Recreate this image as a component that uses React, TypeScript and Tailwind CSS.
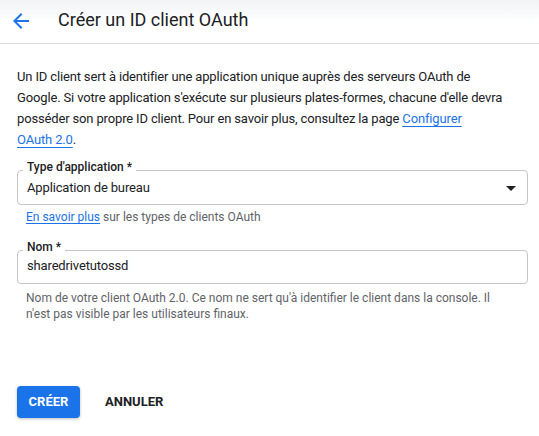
import React from "react";

export default function App() {
  return (
    <div className="w-[539px] h-[436px] bg-white text-[#202124] overflow-hidden" style={{ fontFamily: "Roboto, 'Liberation Sans', sans-serif" }}>
      <div className="h-[44px] border-b border-[#dadce0] flex items-center bg-gradient-to-b from-[#f1f3f4] via-white to-white">
        <div className="w-[24px] h-[24px] ml-[9px] mr-[25px] flex items-center justify-center mt-[-2px]">
          <svg width="24" height="24" viewBox="0 0 24 24" fill="#1a73e8">
            <path d="M20 11H7.83l5.59-5.59L12 4l-8 8 8 8 1.41-1.41L7.83 13H20v-2z" />
          </svg>
        </div>
        <div className="text-[18px] leading-[24px] text-[#202124] mt-[-3px]">Créer un ID client OAuth</div>
      </div>

      <div className="px-[17px]">
        <p className="mt-[22px] w-[488px] text-[13px] leading-[21px] tracking-[-0.15px] text-[#202124]">
          Un ID client sert à identifier une application unique auprès des serveurs OAuth de Google. Si votre application s'exécute sur plusieurs plates-formes, chacune d'elle devra posséder son propre ID client. Pour en savoir plus, consultez la page{" "}
          <span className="text-[#1a73e8] underline underline-offset-[3px] decoration-[1px]">Configurer</span>{" "}
          <span className="text-[#1a73e8] underline underline-offset-[3px] decoration-[1px]">{"OAuth\u00A02.0"}</span>.
        </p>

        <div className="relative mt-[20px] h-[35px] w-[511px] border border-[#c4c7c5] rounded-[4px] flex items-center pl-[9px] pr-[11px]">
          <span className="absolute left-[5px] top-[-12px] px-[4px] bg-white text-[12px] leading-[16px] font-medium text-[#202124]">Type d'application *</span>
          <span className="text-[13px] leading-[20px] tracking-[-0.15px] mt-[1px] flex-1">Application de bureau</span>
          <svg width="10" height="5" viewBox="0 0 10 5" className="mt-[1px]">
            <path d="M0 0l5 5 5-5z" fill="#202124" />
          </svg>
        </div>
        <div className="mt-[4px] pl-[9px] text-[12px] leading-[16px] text-[#5f6368]">
          <span className="text-[#1a73e8] underline underline-offset-[2px]">En savoir plus</span> sur les types de clients OAuth
        </div>

        <div className="relative mt-[25px] h-[34px] w-[511px] border border-[#c4c7c5] rounded-[4px] flex items-center pl-[9px]">
          <span className="absolute left-[5px] top-[-12px] px-[4px] bg-white text-[12px] leading-[16px] font-medium text-[#202124]">Nom *</span>
          <span className="text-[13px] leading-[20px] tracking-[-0.15px] mt-[-2px]">sharedrivetutossd</span>
        </div>
        <div className="mt-[6px] pl-[9px] pr-[10px] text-[12px] leading-[16px] text-[#5f6368]">
          Nom de votre client OAuth 2.0. Ce nom ne sert qu'à identifier le client dans la console. Il n'est pas visible par les utilisateurs finaux.
        </div>

        <div className="mt-[64px] flex items-center">
          <button className="h-[32px] w-[63px] rounded-[4px] bg-[#1a73e8] text-white text-[13px] font-bold shadow-[0_1px_3px_rgba(60,64,67,0.35)]">CRÉER</button>
          <button className="ml-[25px] text-[13px] font-bold text-[#202124]">ANNULER</button>
        </div>
      </div>
    </div>
  );
}
